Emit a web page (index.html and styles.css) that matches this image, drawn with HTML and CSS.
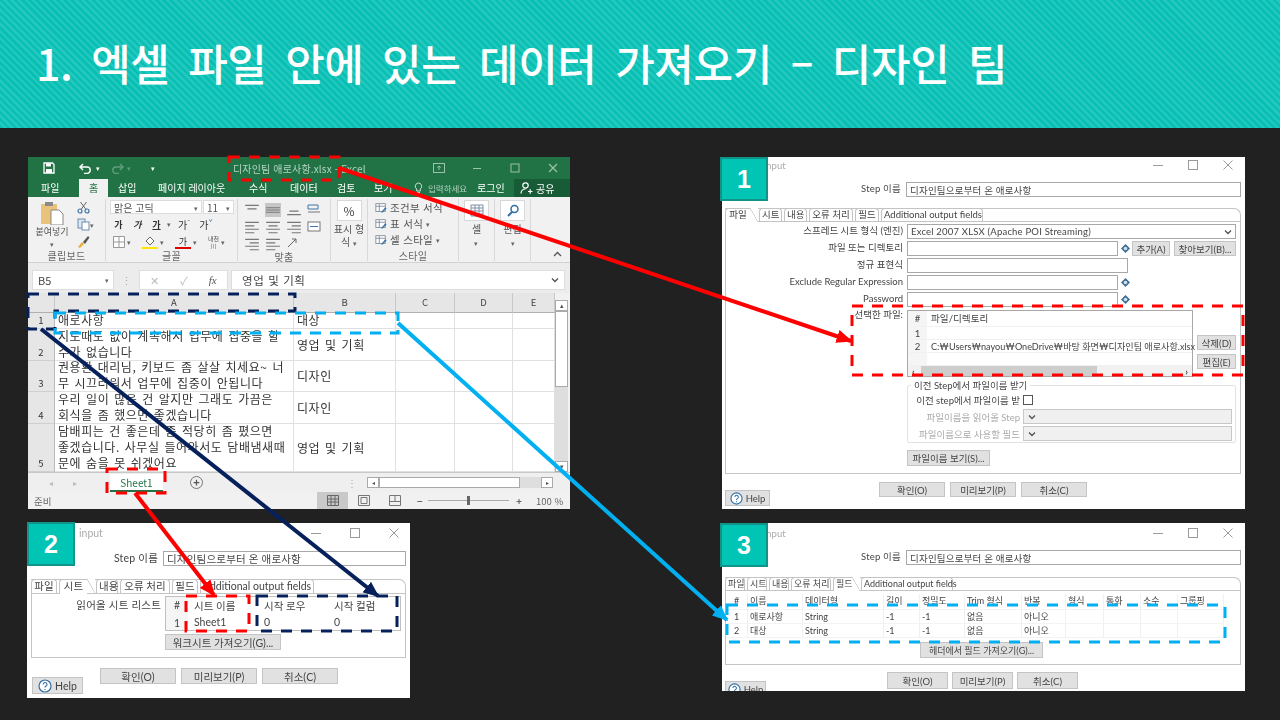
FILE: index.html
```html
<!DOCTYPE html>
<html lang="ko">
<head>
    <meta charset="UTF-8">
    <title>엑셀 파일 안에 있는 데이터 가져오기</title>
    <link rel="stylesheet" href="styles.css">
</head>
<body>
<svg class="defs" width="0" height="0">
    <defs>
        <symbol id="var" viewBox="0 0 10 10"><path d="M5 0l5 5-5 5-5-5z" fill="#3f6f94"/><circle cx="5" cy="5" r="2" fill="#cfe0ea"/></symbol>
        <symbol id="chev" viewBox="0 0 10 10"><path d="M2 3.5l3 3 3-3" fill="none" stroke="#555" stroke-width="1.4"/></symbol>
        <symbol id="lines-t" viewBox="0 0 14 12"><path d="M1 2h12M3 5h8" stroke="#777" fill="none"/></symbol>
        <symbol id="lines-m" viewBox="0 0 14 12"><path d="M1 4h12M1 6h12M1 8h12" stroke="#777" fill="none"/></symbol>
        <symbol id="lines-b" viewBox="0 0 14 12"><path d="M3 7h8M1 10h12" stroke="#777" fill="none"/></symbol>
        <symbol id="lines-l" viewBox="0 0 14 12"><path d="M1 2h12M1 5h8M1 8h12M1 11h8" stroke="#777" fill="none"/></symbol>
        <symbol id="lines-c" viewBox="0 0 14 12"><path d="M1 2h12M3 5h8M1 8h12M3 11h8" stroke="#777" fill="none"/></symbol>
        <symbol id="lines-r" viewBox="0 0 14 12"><path d="M1 2h12M5 5h8M1 8h12M5 11h8" stroke="#777" fill="none"/></symbol>
        <symbol id="help" viewBox="0 0 14 14"><circle cx="7" cy="7" r="6" fill="#fff" stroke="#2f6ea5" stroke-width="1.2"/><path d="M5.2 5.4a1.9 1.9 0 1 1 2.8 1.7c-.7.4-1 .7-1 1.5M7 10v1" fill="none" stroke="#2f6ea5" stroke-width="1.1"/></symbol>
        <symbol id="ctl-min" viewBox="0 0 12 12"><path d="M1 6.5h10" stroke="#9a9a9a"/></symbol>
        <symbol id="ctl-max" viewBox="0 0 12 12"><rect x="1.5" y="1.5" width="9" height="9" fill="none" stroke="#9a9a9a"/></symbol>
        <symbol id="ctl-x" viewBox="0 0 12 12"><path d="M1.5 1.5l9 9M10.5 1.5l-9 9" stroke="#9a9a9a"/></symbol>
        <symbol id="style-ic" viewBox="0 0 14 14"><rect x="1" y="2" width="11" height="9" fill="#fff" stroke="#7a8a9a"/><path d="M1 5h11M5 2v9" stroke="#7a8a9a"/><path d="M7 12l5-6 1.500 1.500-5 5z" fill="#3f74a8"/></symbol>
        <marker id="tip-red" markerWidth="4" markerHeight="3.4" refX="3.6" refY="1.7" orient="auto"><path d="M0 0l4 1.700-4 1.700z" fill="#ff0000"/></marker>
        <marker id="tip-navy" markerWidth="4" markerHeight="3.4" refX="3.6" refY="1.7" orient="auto"><path d="M0 0l4 1.700-4 1.700z" fill="#06205c"/></marker>
        <marker id="tip-cyan" markerWidth="4" markerHeight="3.4" refX="3.6" refY="1.7" orient="auto"><path d="M0 0l4 1.700-4 1.700z" fill="#00b0f0"/></marker>
    </defs>
</svg>

<div class="slide">
    <header class="banner">
        <h1>1. 엑셀 파일 안에 있는 데이터 가져오기 – 디자인 팀</h1>
    </header>

    <main class="stage">
        <!-- Excel window -->
        <section class="win xl">
            <div class="xl-title">
                <div class="qat">
                    <svg class="qat-save" width="12" height="12" viewBox="0 0 12 12"><path d="M1 1h8.500L11 2.500V11H1z" fill="none" stroke="#fff" stroke-width="1.300"/><path d="M3 1.500h5v3H3zM3 7h6v4H3z" fill="#fff"/></svg>
                    <svg class="qat-undo" width="14" height="11" viewBox="0 0 14 11"><path d="M4 1L1 4l3 3M1.500 4H8a3.200 3.200 0 0 1 0 6.400H5" fill="none" stroke="#fff" stroke-width="1.500"/></svg>
                    <span class="qat-caret">▾</span>
                    <svg class="qat-redo" width="14" height="11" viewBox="0 0 14 11"><path d="M10 1l3 3-3 3M12.500 4H6a3.200 3.200 0 0 0 0 6.400h3" fill="none" stroke="#5f9c7b" stroke-width="1.500"/></svg>
                    <span class="qat-caret dim">▾</span>
                    <span class="qat-more">▾</span>
                </div>
                <span class="xl-name">디자인팀 애로사항.xlsx - Excel</span>
                <div class="xl-ctl">
                    <svg width="12" height="10" viewBox="0 0 12 10"><rect x=".5" y=".5" width="11" height="9" fill="none" stroke="#9cc2ac"/><path d="M6 7V3M4.300 4.500L6 3l1.700 1.500" fill="none" stroke="#9cc2ac"/></svg>
                    <svg width="12" height="10" viewBox="0 0 12 10"><path d="M2 5.500h8" stroke="#9cc2ac"/></svg>
                    <svg width="12" height="10" viewBox="0 0 12 10"><rect x="2" y="1" width="8" height="8" fill="none" stroke="#9cc2ac"/></svg>
                    <svg width="12" height="10" viewBox="0 0 12 10"><path d="M2 1l8 8M10 1L2 9" stroke="#9cc2ac" stroke-width="1.200"/></svg>
                </div>
            </div>
            <nav class="xl-menu">
                <span class="m m-file">파일</span>
                <span class="m m-home">홈</span>
                <span class="m m-ins">삽입</span>
                <span class="m m-page">페이지 레이아웃</span>
                <span class="m m-calc">수식</span>
                <span class="m m-data">데이터</span>
                <span class="m m-rev">검토</span>
                <span class="m m-view">보기</span>
                <svg class="bulb" width="9" height="12" viewBox="0 0 9 12"><path d="M4.500 1a3.300 3.300 0 0 0-1.800 6V9h3.600V7a3.300 3.300 0 0 0-1.800-6zM3 10.500h3" fill="none" stroke="#cfe3d7"/></svg>
                <span class="m m-ask">입력하세요</span>
                <span class="m m-login">로그인</span>
                <span class="m-share">
                    <svg width="13" height="12" viewBox="0 0 13 12"><circle cx="5.500" cy="3.500" r="2.700" fill="none" stroke="#fff" stroke-width="1.200"/><path d="M1 11.500c0-3 2-4.500 4.500-4.500M8 9.500h4.500M10.200 7.200v4.500" fill="none" stroke="#fff" stroke-width="1.200"/></svg>
                    공유
                </span>
            </nav>
            <div class="ribbon">
                <div class="rg rg-clip">
                    <div class="rg-body clip-body">
                        <div class="paste">
                            <svg width="24" height="24" viewBox="0 0 24 24"><rect x="1" y="3" width="16" height="20" rx="1" fill="#e9c27c"/><rect x="5" y="1" width="8" height="4" fill="#8a8a8a"/><path d="M11 9h8l4 4v11H11z" fill="#fff" stroke="#888"/></svg>
                            <span>붙여넣기</span>
                            <i class="caret">▾</i>
                        </div>
                        <div class="clip-small">
                            <svg width="13" height="13" viewBox="0 0 13 13"><circle cx="3" cy="10" r="2" fill="none" stroke="#3f74a8" stroke-width="1.200"/><circle cx="10" cy="10" r="2" fill="none" stroke="#3f74a8" stroke-width="1.200"/><path d="M4 8.500L9.500 1M9 8.500L3.500 1" stroke="#666"/></svg>
                            <span class="row"><svg width="13" height="13" viewBox="0 0 13 13"><rect x="1" y="1" width="7" height="9" fill="#dbe7f2" stroke="#6b8bab"/><rect x="5" y="4" width="7" height="8" fill="#fff" stroke="#6b8bab"/></svg><i class="caret">▾</i></span>
                            <svg width="13" height="13" viewBox="0 0 13 13"><path d="M1 12l4-5 2 2-4 4z" fill="#e6b23c"/><path d="M6 7l5-6 1.500 1.500L8 9z" fill="#555"/></svg>
                        </div>
                    </div>
                    <div class="rg-name">클립보드</div>
                </div>
                <div class="rg rg-font">
                    <div class="rg-body font-body">
                        <div class="row">
                            <span class="fbox fname">맑은 고딕<i class="caret">▾</i></span>
                            <span class="fbox fsize">11<i class="caret">▾</i></span>
                        </div>
                        <div class="row fnt-row">
                            <b class="fb">가</b><b class="fb it">가</b><b class="fb ul">가</b><i class="caret">▾</i>
                            <span class="fb big">가<sup>ˆ</sup></span><span class="fb big">가<sup>ˇ</sup></span>
                        </div>
                        <div class="row fnt-row">
                            <svg class="ic-border" width="12" height="12" viewBox="0 0 12 12"><path d="M.5.500h11v11H.500zM6 .500v11M.500 6h11" fill="#fff" stroke="#999"/></svg><i class="caret">▾</i>
                            <span class="color-ic yl"><svg width="12" height="10" viewBox="0 0 12 10"><path d="M2 5l4-4 4 4-4 4z" fill="#fff" stroke="#666"/></svg></span><i class="caret">▾</i>
                            <span class="color-ic rd">가</span><i class="caret">▾</i>
                            <span class="ruby">내천<br><em>川</em></span><i class="caret">▾</i>
                        </div>
                    </div>
                    <div class="rg-name">글꼴</div>
                </div>
                <div class="rg rg-align">
                    <div class="rg-body align-body">
                        <svg class="al"><use href="#lines-t"/></svg><svg class="al on"><use href="#lines-m"/></svg><svg class="al"><use href="#lines-b"/></svg><svg class="al"><path d="M1 2h10v4H1z" fill="none" stroke="#3f74a8"/><path d="M1 9h12" stroke="#777"/></svg>
                        <svg class="al"><use href="#lines-l"/></svg><svg class="al"><use href="#lines-c"/></svg><svg class="al"><use href="#lines-r"/></svg><svg class="al"><rect x="1" y="2" width="12" height="9" fill="#fff" stroke="#777"/><path d="M3 6.500h8" stroke="#3f74a8"/></svg>
                        <svg class="al"><use href="#lines-r"/></svg><svg class="al"><use href="#lines-l"/></svg><svg class="al"><path d="M2 10L10 2M6 2h4v4" fill="none" stroke="#666"/></svg>
                    </div>
                    <div class="rg-name">맞춤</div>
                </div>
                <div class="rg rg-num">
                    <div class="rg-body big-btn">
                        <span class="tile pct">%</span>
                        <span class="tile-txt">표시 형<br>식 <i class="caret">▾</i></span>
                    </div>
                </div>
                <div class="rg rg-style">
                    <div class="rg-body style-body">
                        <span class="row"><svg width="12" height="12"><use href="#style-ic"/></svg>조건부 서식</span>
                        <span class="row"><svg width="12" height="12"><use href="#style-ic"/></svg>표 서식 <i class="caret">▾</i></span>
                        <span class="row"><svg width="12" height="12"><use href="#style-ic"/></svg>셀 스타일 <i class="caret">▾</i></span>
                    </div>
                    <div class="rg-name">스타일</div>
                </div>
                <div class="rg rg-cell">
                    <div class="rg-body big-btn">
                        <span class="tile"><svg width="14" height="13" viewBox="0 0 14 13"><path d="M1 1h12v11H1zM1 4h12M1 7h12M1 10h12M5 1v11M9 1v11" fill="#fff" stroke="#7c8fa3"/></svg></span>
                        <span class="tile-txt">셀<br><i class="caret">▾</i></span>
                    </div>
                </div>
                <div class="rg rg-cell">
                    <div class="rg-body big-btn">
                        <span class="tile"><svg width="14" height="13" viewBox="0 0 14 13"><circle cx="8.500" cy="5" r="3.500" fill="none" stroke="#2f6ea5" stroke-width="1.500"/><path d="M6 8l-4 4" stroke="#2f6ea5" stroke-width="2"/></svg></span>
                        <span class="tile-txt">편집<br><i class="caret">▾</i></span>
                    </div>
                </div>
                <div class="rg-end"><svg width="9" height="6" viewBox="0 0 9 6"><path d="M1 5l3.500-3.500L8 5" fill="none" stroke="#555" stroke-width="1.300"/></svg></div>
            </div>
            <div class="fbar">
                <span class="namebox">B5<i class="caret">▾</i></span>
                <span class="fdots">⋮</span>
                <span class="fbtns"><em>✕</em><em>✓</em><em class="fx">fx</em></span>
                <span class="finput">영업 및 기획<svg width="10" height="10"><use href="#chev"/></svg></span>
            </div>
            <div class="sheet">
                <div class="grid">
                    <div class="hd corner"></div><div class="hd">A</div><div class="hd">B</div><div class="hd">C</div><div class="hd">D</div><div class="hd">E</div>
                    <div class="rn">1</div><div class="c">애로사항</div><div class="c">대상</div><div class="c"></div><div class="c"></div><div class="c"></div>
                    <div class="rn">2</div><div class="c">지도때도 없이 계속해서 업무에 집중을 할<br>수가 없습니다</div><div class="c mid">영업 및 기획</div><div class="c"></div><div class="c"></div><div class="c"></div>
                    <div class="rn">3</div><div class="c">권용환 대리님, 키보드 좀 살살 치세요~ 너<br>무 시끄러워서 업무에 집중이 안됩니다</div><div class="c mid">디자인</div><div class="c"></div><div class="c"></div><div class="c"></div>
                    <div class="rn">4</div><div class="c">우리 일이 많은 건 알지만 그래도 가끔은<br>회식을 좀 했으면 좋겠습니다</div><div class="c mid">디자인</div><div class="c"></div><div class="c"></div><div class="c"></div>
                    <div class="rn">5</div><div class="c">담배피는 건 좋은데 좀 적당히 좀 폈으면<br>좋겠습니다. 사무실 들어와서도 담배냄새때<br>문에 숨을 못 쉬겠어요</div><div class="c mid">영업 및 기획</div><div class="c"></div><div class="c"></div><div class="c"></div>
                </div>
                <div class="vscroll"><span class="vbtn">▴</span><span class="vthumb"></span><span class="vbtn end">▾</span></div>
            </div>
            <div class="tabbar">
                <span class="nav">◂</span><span class="nav">▸</span>
                <span class="sheet-tab">Sheet1</span>
                <span class="add">+</span>
                <span class="tdots">⋮</span>
                <div class="hscroll"><span class="hbtn">◂</span><span class="hthumb"></span><span class="hbtn">▸</span></div>
            </div>
            <div class="status">
                <span class="ready">준비</span>
                <span class="view on"><svg width="12" height="11" viewBox="0 0 12 11"><path d="M.5.500h11v10H.500zM.500 4h11M.500 7h11M4 .500v10M8 .500v10" fill="none" stroke="#666"/></svg></span>
                <span class="view"><svg width="12" height="11" viewBox="0 0 12 11"><path d="M.5.500h11v10H.500z" fill="none" stroke="#777"/><path d="M3 2.500h6v6H3z" fill="none" stroke="#777"/></svg></span>
                <span class="view"><svg width="12" height="11" viewBox="0 0 12 11"><path d="M.5.500h11v10H.500zM.500 6.500h11M6 .500v6" fill="none" stroke="#777"/></svg></span>
                <span class="zoom-m">−</span>
                <span class="slider"><i></i></span>
                <span class="zoom-p">+</span>
                <span class="pct-txt">100 %</span>
            </div>
        </section>

        <!-- dialog 1: file tab -->
        <section class="win dlg d1">
            <div class="bar"><span class="bar-t">input</span><span class="ctls"><svg><use href="#ctl-min"/></svg><svg><use href="#ctl-max"/></svg><svg><use href="#ctl-x"/></svg></span></div>
            <div class="step"><label>Step 이름</label><span class="inp">디자인팀으로부터 온 애로사항</span></div>
            <div class="tabs">
                <span class="tab on">파일</span><span class="tab">시트</span><span class="tab">내용</span><span class="tab">오류 처리</span><span class="tab">필드</span><span class="tab">Additional output fields</span>
            </div>
            <div class="panel file-panel">
                <div class="frow"><label>스프레드 시트 형식 (엔진)</label><span class="inp sel w329">Excel 2007 XLSX (Apache POI Streaming)<svg width="10" height="10"><use href="#chev"/></svg></span></div>
                <div class="frow"><label>파일 또는 디렉토리</label><span class="inp w211"></span><svg class="var"><use href="#var"/></svg><span class="btn add-b">추가(A)</span><span class="btn find-b">찾아보기(B)...</span></div>
                <div class="frow"><label>정규 표현식</label><span class="inp w221"></span></div>
                <div class="frow"><label>Exclude Regular Expression</label><span class="inp w211"></span><svg class="var"><use href="#var"/></svg></div>
                <div class="frow"><label>Password</label><span class="inp w211"></span><svg class="var"><use href="#var"/></svg></div>
                <div class="frow files">
                    <label>선택한 파일:</label>
                    <div class="ftable">
                        <div class="tr th"><span class="num">#</span><span>파일/디렉토리</span></div>
                        <div class="tr"><span class="num">1</span><span></span></div>
                        <div class="tr"><span class="num">2</span><span class="path">C:₩Users₩nayou₩OneDrive₩바탕 화면₩디자인팀 애로사항.xlsx</span></div>
                        <div class="tr"><span class="num"></span><span></span></div>
                        <div class="fscroll"><i>‹</i><b></b><i>›</i></div>
                    </div>
                    <div class="side-btns"><span class="btn">삭제(D)</span><span class="btn">편집(E)</span></div>
                </div>
                <fieldset class="grp">
                    <legend>이전 Step에서 파일이름 받기</legend>
                    <div class="grow"><label>이전 step에서 파일이름 받</label><span class="check"></span></div>
                    <div class="grow off"><label>파일이름을 읽어올 Step</label><span class="inp sel dis"><svg width="10" height="10"><use href="#chev"/></svg></span></div>
                    <div class="grow off"><label>파일이름으로 사용할 필드</label><span class="inp sel dis"><svg width="10" height="10"><use href="#chev"/></svg></span></div>
                </fieldset>
                <span class="btn show-b">파일이름 보기(S)...</span>
            </div>
            <div class="foot">
                <span class="btn help"><svg width="13" height="13"><use href="#help"/></svg>Help</span>
                <span class="btn act">확인(O)</span><span class="btn act">미리보기(P)</span><span class="btn act">취소(C)</span>
            </div>
        </section>

        <!-- dialog 2: sheet tab -->
        <section class="win dlg d2">
            <div class="bar"><span class="bar-t">input</span><span class="ctls"><svg><use href="#ctl-min"/></svg><svg><use href="#ctl-max"/></svg><svg><use href="#ctl-x"/></svg></span></div>
            <div class="step"><label>Step 이름</label><span class="inp">디자인팀으로부터 온 애로사항</span></div>
            <div class="tabs">
                <span class="tab">파일</span><span class="tab on">시트</span><span class="tab">내용</span><span class="tab">오류 처리</span><span class="tab">필드</span><span class="tab">Additional output fields</span>
            </div>
            <div class="panel sheet-panel">
                <label>읽어올 시트 리스트</label>
                <div class="sheet-col">
                    <div class="stable">
                        <span class="sh num">#</span><span class="sh">시트 이름</span><span class="sh">시작 로우</span><span class="sh">시작 컬럼</span>
                        <span class="num">1</span><span>Sheet1</span><span>0</span><span>0</span>
                    </div>
                    <span class="btn ws-b">워크시트 가져오기(G)...</span>
                </div>
            </div>
            <div class="foot">
                <span class="btn help"><svg width="14" height="14"><use href="#help"/></svg>Help</span>
                <span class="btn act">확인(O)</span><span class="btn act">미리보기(P)</span><span class="btn act">취소(C)</span>
            </div>
        </section>

        <!-- dialog 3: fields tab -->
        <section class="win dlg d3">
            <div class="bar"><span class="bar-t">input</span><span class="ctls"><svg><use href="#ctl-min"/></svg><svg><use href="#ctl-max"/></svg><svg><use href="#ctl-x"/></svg></span></div>
            <div class="step"><label>Step 이름</label><span class="inp">디자인팀으로부터 온 애로사항</span></div>
            <div class="tabs">
                <span class="tab">파일</span><span class="tab">시트</span><span class="tab">내용</span><span class="tab">오류 처리</span><span class="tab on">필드</span><span class="tab">Additional output fields</span>
            </div>
            <div class="panel field-panel">
                <div class="ftb">
                    <span class="num">#</span><span>이름</span><span>데이터형</span><span>길이</span><span>정밀도</span><span>Trim 형식</span><span>반복</span><span>형식</span><span>통화</span><span>소수</span><span>그룹핑</span>
                    <span class="num">1</span><span>애로사항</span><span>String</span><span>-1</span><span>-1</span><span>없음</span><span>아니오</span><span></span><span></span><span></span><span></span>
                    <span class="num">2</span><span>대상</span><span>String</span><span>-1</span><span>-1</span><span>없음</span><span>아니오</span><span></span><span></span><span></span><span></span>
                </div>
                <span class="btn hdr-b">헤더에서 필드 가져오기(G)...</span>
            </div>
            <div class="foot">
                <span class="btn help"><svg width="13" height="13"><use href="#help"/></svg>Help</span>
                <span class="btn act">확인(O)</span><span class="btn act">미리보기(P)</span><span class="btn act">취소(C)</span>
            </div>
        </section>

        <span class="badge b1">1</span>
        <span class="badge b2">2</span>
        <span class="badge b3">3</span>

        <!-- annotations, coordinates are the full slide -->
        <svg class="marks" width="1280" height="720" viewBox="0 0 1280 720">
            <g class="dash red">
                <rect x="229" y="157" width="110" height="23"/>
                <rect x="852" y="306" width="391" height="69"/>
                <rect x="107" y="469" width="58" height="24"/>
                <rect x="186" y="596" width="63" height="35"/>
            </g>
            <g class="dash navy">
                <path d="M28 294H295V311H55V329H28Z"/>
                <rect x="257" y="596" width="140" height="35"/>
            </g>
            <g class="dash cyan">
                <rect x="55" y="313" width="343" height="20"/>
                <rect x="727" y="605" width="498" height="37"/>
            </g>
            <line class="arrow" x1="339" y1="168" x2="851" y2="341" stroke="#ff0000" marker-end="url(#tip-red)"/>
            <line class="arrow" x1="135" y1="493" x2="214" y2="595" stroke="#ff0000" marker-end="url(#tip-red)"/>
            <line class="arrow" x1="41" y1="329" x2="378" y2="596" stroke="#06205c" marker-end="url(#tip-navy)"/>
            <line class="arrow" x1="398" y1="323" x2="727" y2="620" stroke="#00b0f0" marker-end="url(#tip-cyan)"/>
        </svg>
    </main>
</div>
</body>
</html>
```

FILE: styles.css
```css
* {
    box-sizing: border-box;
}

html, body {
    margin: 0;
    padding: 0;
    background-color: #212121;
}

body {
    font-family: "Noto Sans CJK KR", "Noto Sans", sans-serif;
    color: #444;
}

.defs {
    position: absolute;
}

.slide {
    width: 1280px;
    height: 720px;
    overflow: hidden;
    background-color: #212121;
}

.banner {
    height: 128px;
    padding: 34px 0 0 36px;
    background-color: #07bfb3;
    background-image: repeating-linear-gradient(45deg, #07bfb3 0, #07bfb3 2.5px, #22c8bd 2.5px, #22c8bd 5px);
}

.banner h1 {
    margin: 0;
    font-size: 43px;
    line-height: 56px;
    font-weight: 500;
    color: #fff;
    letter-spacing: -0.4px;
    word-spacing: 7px;
    white-space: nowrap;
}

.stage {
    position: relative;
    height: 592px;
}

.win {
    position: absolute;
    overflow: hidden;
    background-color: #fff;
    filter: blur(0.4px);
}

.caret {
    font-style: normal;
    font-size: 7px;
    color: #666;
}

/* excel */
.xl {
    left: 28px;
    top: 29px;
    width: 542px;
    height: 352px;
    display: flex;
    flex-direction: column;
    font-size: 10px;
    background-color: #f1f1f1;
}

.xl-title {
    height: 22px;
    background-color: #217346;
    display: flex;
    align-items: center;
    color: #b4d3c1;
    flex-shrink: 0;
}

.qat {
    width: 205px;
    display: flex;
    align-items: center;
    color: #fff;
}

.qat-save {
    margin-left: 15px;
}

.qat-undo {
    margin-left: 24px;
}

.qat-caret {
    font-size: 7px;
    margin-left: 3px;
}

.qat-caret.dim {
    color: #5f9c7b;
}

.qat-redo {
    margin-left: 10px;
}

.qat-more {
    font-size: 7px;
    margin-left: 20px;
}

.xl-name {
    width: 170px;
    font-size: 10px;
    letter-spacing: 0.15px;
    white-space: nowrap;
}

.xl-ctl {
    display: flex;
    gap: 26px;
    margin-left: 30px;
}

.xl-menu {
    height: 18px;
    background-color: #217346;
    color: #fff;
    position: relative;
    flex-shrink: 0;
    font-size: 10px;
}

/* menu entries sit at measured spots along the bar */
.m {
    position: absolute;
    top: 0;
    line-height: 18px;
    white-space: nowrap;
}

.m-file { left: 13px; }
.m-home { left: 51px; width: 29px; background-color: #f1f1f1; color: #217346; text-align: center; }
.m-ins { left: 90px; }
.m-page { left: 130px; }
.m-calc { left: 221px; }
.m-data { left: 262px; }
.m-rev { left: 309px; }
.m-view { left: 346px; }
.m-ask { left: 400px; color: #b4d3c1; font-size: 8.5px; }
.m-login { left: 449px; }

.bulb {
    position: absolute;
    left: 386px;
    top: 3px;
}

.m-share {
    position: absolute;
    left: 486px;
    top: 0;
    width: 56px;
    height: 18px;
    background-color: #185c37;
    display: flex;
    align-items: center;
    gap: 3px;
    padding-left: 6px;
}

.ribbon {
    height: 66px;
    display: flex;
    background-color: #f1f1f1;
    border-bottom: 1px solid #d2d2d2;
    flex-shrink: 0;
    font-size: 9.5px;
    color: #555;
}

.rg {
    display: flex;
    flex-direction: column;
    border-right: 1px solid #d8d8d8;
    margin: 2px 0 1px;
}

.rg-clip { width: 78px; }
.rg-font { width: 132px; }
.rg-align { width: 93px; }
.rg-num { width: 37px; }
.rg-style { width: 91px; }
.rg-cell { width: 36px; }

.rg-body {
    height: 53px;
}

.rg-name {
    text-align: center;
    font-size: 10px;
    line-height: 10px;
    color: #666;
    letter-spacing: 0.3px;
}

.row {
    display: flex;
    align-items: center;
}

.clip-body {
    display: flex;
    padding: 2px 0 0 6px;
}

.paste {
    width: 36px;
    display: flex;
    flex-direction: column;
    align-items: center;
    font-size: 9px;
    line-height: 12px;
    white-space: nowrap;
}

.paste span {
    margin-top: 1px;
}

.clip-small {
    margin-left: 7px;
    display: flex;
    flex-direction: column;
    gap: 4px;
}

.font-body {
    padding: 1px 0 0 4px;
}

.fbox {
    height: 14px;
    line-height: 14px;
    background-color: #fff;
    border: 1px solid #dcdcdc;
    display: flex;
    justify-content: space-between;
    padding: 0 3px;
    font-size: 10px;
}

.fname {
    width: 92px;
    margin-right: 1px;
}

.fsize {
    width: 31px;
}

.fnt-row {
    height: 16px;
    margin-top: 2px;
    gap: 2px;
}

.fb {
    width: 17px;
    text-align: center;
    font-size: 9px;
    color: #333;
}

.fb.it {
    font-style: italic;
}

.fb.ul {
    text-decoration: underline;
}

.fb.big {
    font-size: 10px;
    margin-left: 2px;
    width: 18px;
}

.fb sup {
    font-size: 7px;
    line-height: 0;
    color: #2f6ea5;
}

.ic-border {
    margin-left: 3px;
}

.color-ic {
    width: 16px;
    height: 13px;
    margin-left: 9px;
    font-size: 9px;
    line-height: 11px;
    text-align: center;
    color: #333;
    border-bottom: 2px solid transparent;
}

.color-ic.yl {
    border-color: #ffe600;
}

.color-ic.rd {
    border-color: #e00000;
}

.ruby {
    margin-left: 9px;
    font-size: 6px;
    line-height: 7px;
    text-align: center;
}

.ruby em {
    color: #2f6ea5;
    font-style: normal;
}

.align-body {
    display: grid;
    grid-template-columns: repeat(4, 21px);
    grid-auto-rows: 17px;
    padding: 2px 0 0 6px;
    align-items: center;
}

.al {
    width: 16px;
    height: 14px;
}

.al.on {
    background-color: #c6c6c6;
}

.big-btn {
    display: flex;
    flex-direction: column;
    align-items: center;
    padding-top: 1px;
    height: 61px;
}

.tile {
    width: 25px;
    height: 21px;
    display: flex;
    align-items: center;
    justify-content: center;
    background-color: #fff;
    border: 1px solid #d8d8d8;
    font-size: 12px;
    color: #444;
}

.tile-txt {
    font-size: 10px;
    line-height: 13px;
    text-align: center;
    margin-top: 1px;
    white-space: nowrap;
}

.style-body {
    padding: 2px 0 0 7px;
    display: flex;
    flex-direction: column;
    gap: 3px;
    white-space: nowrap;
    font-size: 10.5px;
    letter-spacing: 0.3px;
}

.style-body .row {
    height: 13px;
    gap: 3px;
}

.rg-end {
    flex: 1;
    display: flex;
    align-items: flex-end;
    justify-content: flex-end;
    padding: 0 8px 5px 0;
}

.fbar {
    height: 30px;
    padding: 7px 5px 2px 4px;
    display: flex;
    flex-shrink: 0;
    background-color: #ececec;
    font-size: 11px;
}

.namebox {
    width: 82px;
    height: 20px;
    background-color: #fff;
    border: 1px solid #ddd;
    display: flex;
    justify-content: space-between;
    align-items: center;
    padding: 0 4px 0 5px;
}

.fdots {
    width: 25px;
    text-align: center;
    color: #aaa;
    line-height: 20px;
}

.fbtns {
    width: 89px;
    height: 20px;
    background-color: #fff;
    border: 1px solid #ddd;
    display: flex;
    justify-content: space-around;
    align-items: center;
    font-style: normal;
    color: #bbb;
    margin-right: 3px;
}

.fbtns em {
    font-style: normal;
}

.fbtns .fx {
    font-family: "Liberation Serif", serif;
    font-style: italic;
    color: #555;
}

.finput {
    flex: 1;
    height: 20px;
    background-color: #fff;
    border: 1px solid #ddd;
    padding: 0 4px 0 10px;
    display: flex;
    align-items: center;
    justify-content: space-between;
    font-size: 11.5px;
    letter-spacing: 0.6px;
}

.sheet {
    display: flex;
    flex-shrink: 0;
    height: 179px;
    background-color: #fff;
    overflow: hidden;
}

.grid {
    display: grid;
    grid-template-columns: 27px 239px 102px 59px 58px 42px;
    grid-template-rows: 20px 16px 32px 31px 32px 48px;
    font-size: 12px;
    line-height: 16px;
    color: #333;
}

.hd {
    background-color: #e6e6e6;
    border-right: 1px solid #c8c8c8;
    border-bottom: 1px solid #b0b0b0;
    text-align: center;
    font-size: 9.5px;
    line-height: 19px;
    color: #444;
}

.rn {
    background-color: #e6e6e6;
    border-right: 1px solid #b8b8b8;
    border-bottom: 1px solid #cfcfcf;
    display: flex;
    align-items: flex-end;
    justify-content: center;
    font-size: 9.5px;
    line-height: 15px;
}

.c {
    border-right: 1px solid #e0e0e0;
    border-bottom: 1px solid #e0e0e0;
    padding-left: 3px;
    display: flex;
    align-items: flex-end;
    white-space: nowrap;
    letter-spacing: 0.55px;
    word-spacing: 1px;
}

.c.mid {
    align-items: center;
}

.vscroll {
    width: 15px;
    display: flex;
    flex-direction: column;
    background-color: #dedede;
    border-top: 7px solid #f1f1f1;
    border-right: 2px solid #f1f1f1;
}

.vbtn {
    height: 11px;
    flex-shrink: 0;
    background-color: #fff;
    border: 1px solid #aaa;
    font-size: 7px;
    line-height: 9px;
    text-align: center;
    color: #555;
}

.vthumb {
    height: 76px;
    background-color: #fff;
    border: 1px solid #aaa;
}

.vbtn.end {
    margin-top: auto;
}

.tabbar {
    height: 20px;
    display: flex;
    align-items: center;
    flex-shrink: 0;
    background-color: #efefef;
    border-top: 1px solid #c8c8c8;
    color: #bbb;
}

.nav {
    width: 24px;
    text-align: center;
    font-size: 8px;
}

.nav:first-child {
    margin-left: 11px;
}

.sheet-tab {
    width: 53px;
    height: 18px;
    margin: 0 0 0 23px;
    background-color: #fff;
    border-bottom: 2px solid #217346;
    color: #217346;
    text-align: center;
    font-size: 10px;
    line-height: 17px;
}

.add {
    width: 13px;
    height: 13px;
    margin-left: 27px;
    border: 1px solid #777;
    border-radius: 50%;
    color: #555;
    font-size: 11px;
    line-height: 10px;
    text-align: center;
    font-weight: 700;
}

.tdots {
    margin-left: 144px;
    color: #aaa;
}

.hscroll {
    margin-left: 10px;
    width: 186px;
    height: 11px;
    display: flex;
    background-color: #dedede;
}

.hbtn {
    width: 12px;
    flex-shrink: 0;
    background-color: #fff;
    border: 1px solid #aaa;
    font-size: 6px;
    line-height: 9px;
    text-align: center;
    color: #555;
}

.hbtn:last-child {
    margin-left: auto;
}

.hthumb {
    width: 141px;
    background-color: #fff;
    border: 1px solid #aaa;
}

.status {
    flex: 1;
    display: flex;
    align-items: center;
    background-color: #f1f1f1;
    font-size: 9.5px;
    color: #666;
}

.ready {
    width: 289px;
    padding-left: 6px;
}

.view {
    width: 31px;
    height: 17px;
    display: flex;
    align-items: center;
    justify-content: center;
}

.view.on {
    background-color: #c9c9c9;
}

.zoom-m {
    margin-left: 7px;
    width: 11px;
    font-weight: 700;
}

.slider {
    position: relative;
    width: 81px;
    height: 1px;
    background-color: #aaa;
}

.slider i {
    position: absolute;
    left: 39px;
    top: -4px;
    width: 3px;
    height: 9px;
    background-color: #666;
}

.zoom-p {
    width: 20px;
    text-align: center;
    font-weight: 700;
}

.pct-txt {
    margin-left: 7px;
}

/* dialogs */
.dlg {
    font-family: Lato, "Noto Sans CJK KR", sans-serif;
    font-size: 9.5px;
    color: #444;
    display: flex;
    flex-direction: column;
    padding: 0 4px 0 3px;
}

.d1 {
    left: 722px;
    top: 29px;
    width: 523px;
    height: 352px;
}

.d2 {
    left: 27px;
    top: 395px;
    width: 383px;
    height: 175px;
    font-size: 10.5px;
}

.d3 {
    left: 722px;
    top: 395px;
    width: 523px;
    height: 168px;
}

.bar {
    height: 16px;
    display: flex;
    align-items: center;
    justify-content: flex-end;
    flex-shrink: 0;
    position: relative;
}

.bar-t {
    position: absolute;
    left: 39px;
    color: #aaa;
}

.ctls {
    display: flex;
    gap: 23px;
    margin-right: 7px;
}

.ctls svg {
    width: 12px;
    height: 12px;
}

.step {
    display: flex;
    align-items: center;
    height: 15px;
    margin-top: 9px;
    flex-shrink: 0;
}

.step label {
    width: 181px;
    text-align: right;
    padding-right: 5px;
    margin-top: -3px;
    letter-spacing: 0.2px;
}

.inp {
    display: flex;
    align-items: center;
    height: 15px;
    border: 1px solid #a8a8a8;
    background-color: #fff;
    padding: 0 3px;
    white-space: nowrap;
    color: #444;
    letter-spacing: 0.2px;
}

.step .inp {
    flex: 1;
}

.tabs {
    display: flex;
    height: 13px;
    margin-top: 11px;
    flex-shrink: 0;
    border-top: 1px solid #c4c4c4;
    border-right: 1px solid #c4c4c4;
    border-top-right-radius: 7px;
}

.tab {
    height: 13px;
    margin-top: -1px;
    padding: 0 2px;
    border: 1px solid #c4c4c4;
    border-bottom: 0;
    border-radius: 4px 4px 0 0;
    margin-right: 2px;
    line-height: 12px;
    text-align: center;
    white-space: nowrap;
    background-color: #fff;
    position: relative;
}

.tab.on {
    margin-right: 9px;
    border-right: 0;
    border-top-right-radius: 0;
    height: 14px;
    z-index: 1;
}

/* slanted right edge of the open tab */
.tab.on::after {
    content: "";
    position: absolute;
    left: 100%;
    top: -1px;
    width: 8px;
    height: 14px;
    background: linear-gradient(to top right, #fff calc(50% - 0.6px), #c4c4c4 50%, #fff calc(50% + 0.6px));
}

.panel {
    border: 1px solid #c4c4c4;
    flex-shrink: 0;
    position: relative;
}

.d1 .panel,
.d1 .tabs,
.d3 .panel,
.d3 .tabs {
    width: 516px;
}

.d1 .tab:nth-child(1) { width: 25px; }
.d1 .tab:nth-child(2) { width: 23px; }
.d1 .tab:nth-child(3) { width: 23px; }
.d1 .tab:nth-child(4) { width: 44px; }
.d1 .tab:nth-child(5) { width: 24px; }
.d1 .tab:nth-child(6) { width: 102px; }

.file-panel {
    height: 253px;
    padding-top: 1px;
}

.frow {
    display: flex;
    align-items: center;
    height: 17px;
    white-space: nowrap;
}

.frow > label {
    width: 181px;
    padding-right: 4px;
    margin-top: -3px;
    text-align: right;
}

.w329 { width: 329px; }
.w221 { width: 221px; }
.w211 { width: 211px; }

.sel {
    justify-content: space-between;
    padding-right: 2px;
}

.var {
    width: 9px;
    height: 9px;
    margin-left: 3px;
}

.btn {
    display: flex;
    align-items: center;
    justify-content: center;
    background-color: #e1e1e1;
    border: 1px solid #c4c4c4;
    white-space: nowrap;
    color: #444;
    flex-shrink: 0;
}

.add-b {
    width: 38px;
    height: 15px;
    margin-left: 2px;
}

.find-b {
    width: 62px;
    height: 15px;
    margin-left: 4px;
}

.files {
    height: 68px;
    align-items: flex-start;
    margin-top: 2px;
}

.ftable {
    width: 286px;
    height: 67px;
    border: 1px solid #a8a8a8;
    position: relative;
    font-size: 9.6px;
}

.tr {
    display: flex;
    height: 13px;
    line-height: 13px;
    border-bottom: 1px solid #f1f1f1;
}

.tr.th {
    height: 16px;
    line-height: 16px;
}

.num {
    width: 19px;
    flex-shrink: 0;
    text-align: center;
    background-color: #f5f5f5;
    margin-right: 4px;
}

.path {
    font-size: 9.1px;
}

.fscroll {
    position: absolute;
    left: 0;
    right: 0;
    bottom: 0;
    height: 10px;
    display: flex;
    justify-content: space-between;
    align-items: center;
    background-color: #f1f1f1;
    padding: 0 4px;
}

.fscroll i {
    font-style: normal;
    font-weight: 700;
}

.fscroll b {
    position: absolute;
    left: 13px;
    width: 176px;
    height: 10px;
    background-color: #cdcdcd;
}

.side-btns {
    display: flex;
    flex-direction: column;
    gap: 4px;
    margin: 25px 0 0 4px;
}

.side-btns .btn {
    width: 39px;
    height: 15px;
}

.grp {
    margin: 2px 0 0 181px;
    padding: 0 3px 0 0;
    width: 329px;
    height: 63px;
    border: 1px solid #e2e2e2;
    border-radius: 2px;
}

.grp legend {
    padding: 0 3px;
    margin-left: 3px;
    font-size: 9.5px;
    line-height: 11px;
}

.grow {
    height: 17px;
    display: flex;
    align-items: center;
    white-space: nowrap;
}

.grow label {
    width: 115px;
    text-align: right;
    padding-right: 3px;
    overflow: hidden;
}

.grow.off label {
    color: #aaa;
}

.check {
    width: 10px;
    height: 10px;
    border: 1px solid #555;
}

.grow .inp {
    width: 209px;
    height: 15px;
}

.dis {
    background-color: #f0f0f0;
    border-color: #c8c8c8;
}

.show-b {
    width: 83px;
    height: 16px;
    margin: 7px 0 0 181px;
}

.foot {
    flex: 1;
    display: flex;
    position: relative;
    padding-left: 154px;
    padding-top: 8px;
    gap: 5px;
}

.act {
    width: 66px;
    height: 15px;
}

.help {
    position: absolute;
    left: 0;
    top: 16px;
    width: 45px;
    height: 16px;
    gap: 3px;
}

/* dialog 2 */
.d2 .bar,
.d3 .bar {
    height: 20px;
}

.d2 .bar-t {
    left: 49px;
}

.d2 .ctls {
    gap: 27px;
    margin-right: 6px;
}

.d2 .step {
    margin-top: 8px;
}

.d2 .step label {
    width: 133px;
}

.d2 .tabs {
    width: 375px;
    margin-left: 1px;
    height: 14px;
    margin-top: 13px;
}

.d2 .tab {
    height: 14px;
    line-height: 13px;
}

.d2 .tab.on {
    height: 15px;
}

.d2 .tab:nth-child(1) { width: 26px; }
.d2 .tab:nth-child(2) { width: 28px; }
.d2 .tab:nth-child(3) { width: 22px; }
.d2 .tab:nth-child(4) { width: 50px; }
.d2 .tab:nth-child(5) { width: 26px; }
.d2 .tab:nth-child(6) { width: 114px; }

.sheet-panel {
    width: 375px;
    height: 65px;
    margin-left: 1px;
    display: flex;
    padding-top: 2px;
}

.sheet-panel label {
    width: 133px;
    text-align: right;
    padding: 1px 4px 0 0;
    letter-spacing: 0.2px;
}

.stable {
    width: 236px;
    display: grid;
    grid-template-columns: 22px 70px 70px 72px;
    grid-template-rows: 18px 15px;
    border: 1px solid #c0c0c0;
    align-items: center;
    line-height: 15px;
}

.stable span {
    padding-left: 6px;
}

.stable .num {
    padding: 0;
    margin: 0;
    width: auto;
    align-self: stretch;
    line-height: 16px;
}

.ws-b {
    width: 116px;
    height: 16px;
    margin-top: 3px;
}

.d2 .foot {
    padding: 10px 0 0 70px;
}

.d2 .act {
    width: 76px;
    height: 16px;
}

.d2 .help {
    left: 2px;
    top: 19px;
    width: 51px;
    height: 17px;
}

/* dialog 3 */
.d3 .step {
    margin-top: 7px;
}

.d3 .tabs {
    margin-top: 12px;
}

.d3 .tab {
    height: 13px;
    line-height: 11px;
    font-size: 9px;
}

.d3 .tab.on {
    height: 14px;
}

.d3 .tab:nth-child(1) { width: 20px; }
.d3 .tab:nth-child(2) { width: 20px; }
.d3 .tab:nth-child(3) { width: 20px; }
.d3 .tab:nth-child(4) { width: 40px; }
.d3 .tab:nth-child(5) { width: 19px; }
.d3 .tab:nth-child(6) { width: 92px; }

.field-panel {
    height: 75px;
}

.ftb {
    display: grid;
    grid-template-columns: 22px 55px 81px 36px 45px 57px 44px 38px 37px 37px 46px;
    grid-template-rows: 16px 14px 14px;
    margin: 3px 0 0 0;
    line-height: 14px;
    font-size: 9px;
}

.ftb span {
    padding-left: 2px;
    border-right: 1px solid #eef0f6;
    border-bottom: 1px solid #f3f3f3;
}

.ftb .num {
    padding: 0;
    margin: 0;
    width: auto;
    background: none;
}

.hdr-b {
    width: 123px;
    height: 16px;
    margin: 4px 0 0 194px;
    font-size: 9px;
}

.d3 .foot {
    padding: 7px 0 0 162px;
    gap: 4px;
}

.d3 .act {
    width: 61px;
    height: 17px;
}

.d3 .help {
    top: 16px;
    width: 41px;
}

/* annotations */
.badge {
    position: absolute;
    width: 48px;
    height: 44px;
    display: flex;
    align-items: center;
    justify-content: center;
    background-color: #00c4b4;
    border: 2px solid #109488;
    color: #fff;
    font-family: "Liberation Sans", sans-serif;
    font-size: 25px;
    font-weight: 700;
}

.b1 {
    left: 720px;
    top: 29px;
}

.b2 {
    left: 27px;
    top: 394px;
}

.b3 {
    left: 720px;
    top: 395px;
}

.marks {
    position: absolute;
    left: 0;
    top: -128px;
    pointer-events: none;
}

.dash {
    fill: none;
    stroke-width: 3;
    stroke-dasharray: 11 9;
}

.dash.red {
    stroke: #ff0000;
}

.dash.navy {
    stroke: #06205c;
}

.dash.cyan {
    stroke: #00b0f0;
}

.arrow {
    stroke-width: 4;
}
```
